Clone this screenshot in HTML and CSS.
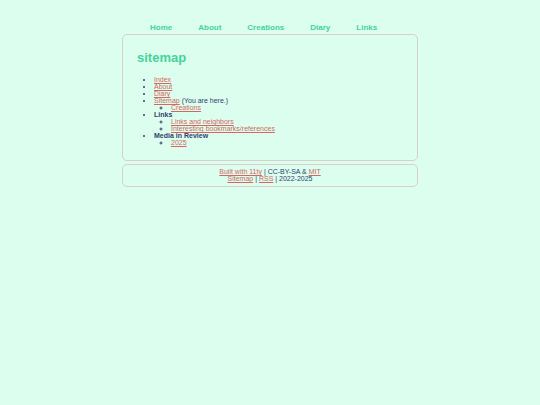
FILE: index.html
```html
<!DOCTYPE html>
<html lang="en">
  <head>
    <meta charset="UTF-8" />
    <meta name="viewport" content="width=device-width, initial-scale=1.0" />
    <title>sitemap</title>
    <link rel="stylesheet" href="styles.css">
  </head>
  <body>
    <nav class="menu">
      <a href="#">Home</a>
      <a href="#">About</a>
      <a href="#">Creations</a>
      <a href="#">Diary</a>
      <a href="#">Links</a>
    </nav>

    <main class="box content">
      <h1>sitemap</h1>
      <ul>
        <li><a href="#">Index</a></li>
        <li><a href="#">About</a></li>
        <li><a href="#">Diary</a></li>
        <li><a href="#">Sitemap</a> (You are here.)
          <ul>
            <li><a href="#">Creations</a></li>
          </ul>
        </li>
        <li><b>Links</b>
          <ul>
            <li><a href="#">Links and neighbors</a></li>
            <li><a href="#">Interesting bookmarks/references</a></li>
          </ul>
        </li>
        <li><b>Media in Review</b>
          <ul>
            <li><a href="#">2025</a></li>
          </ul>
        </li>
      </ul>
    </main>

    <footer class="box footer">
      <div><a href="#">Built with 11ty</a> | CC-BY-SA &amp; <a href="#">MIT</a></div>
      <div><a href="#">Sitemap</a> | <a href="#">RSS</a> | 2022-2025</div>
    </footer>
  </body>
</html>
```
FILE: styles.css
```css
* {
  box-sizing: border-box;
}

body {
  max-width: 296px;
  margin: 0 auto;
  padding-top: 23px;
  background: #dbfeef;
  color: #35406b;
  font-family: "Liberation Sans", Arial, sans-serif;
  font-size: 7px;
  line-height: 7px;
}

a {
  color: #d6665f;
}

.menu {
  display: flex;
  gap: 26px;
  padding: 0 28px 1px;
  font-size: 8px;
  font-weight: bold;
  line-height: 10px;
}

.menu a {
  color: #44d39a;
  text-decoration: none;
}

.box {
  border: 1px solid #d9cfca;
  border-radius: 5px;
  margin-bottom: 3px;
}

.content {
  padding: 15px 14px 14px;
}

h1 {
  margin: 0 0 10px;
  color: #44d39a;
  font-size: 13px;
  line-height: 16px;
}

ul {
  margin: 0;
  padding-left: 17px;
}

.footer {
  padding: 3px 4px 4px;
  text-align: center;
}
```
